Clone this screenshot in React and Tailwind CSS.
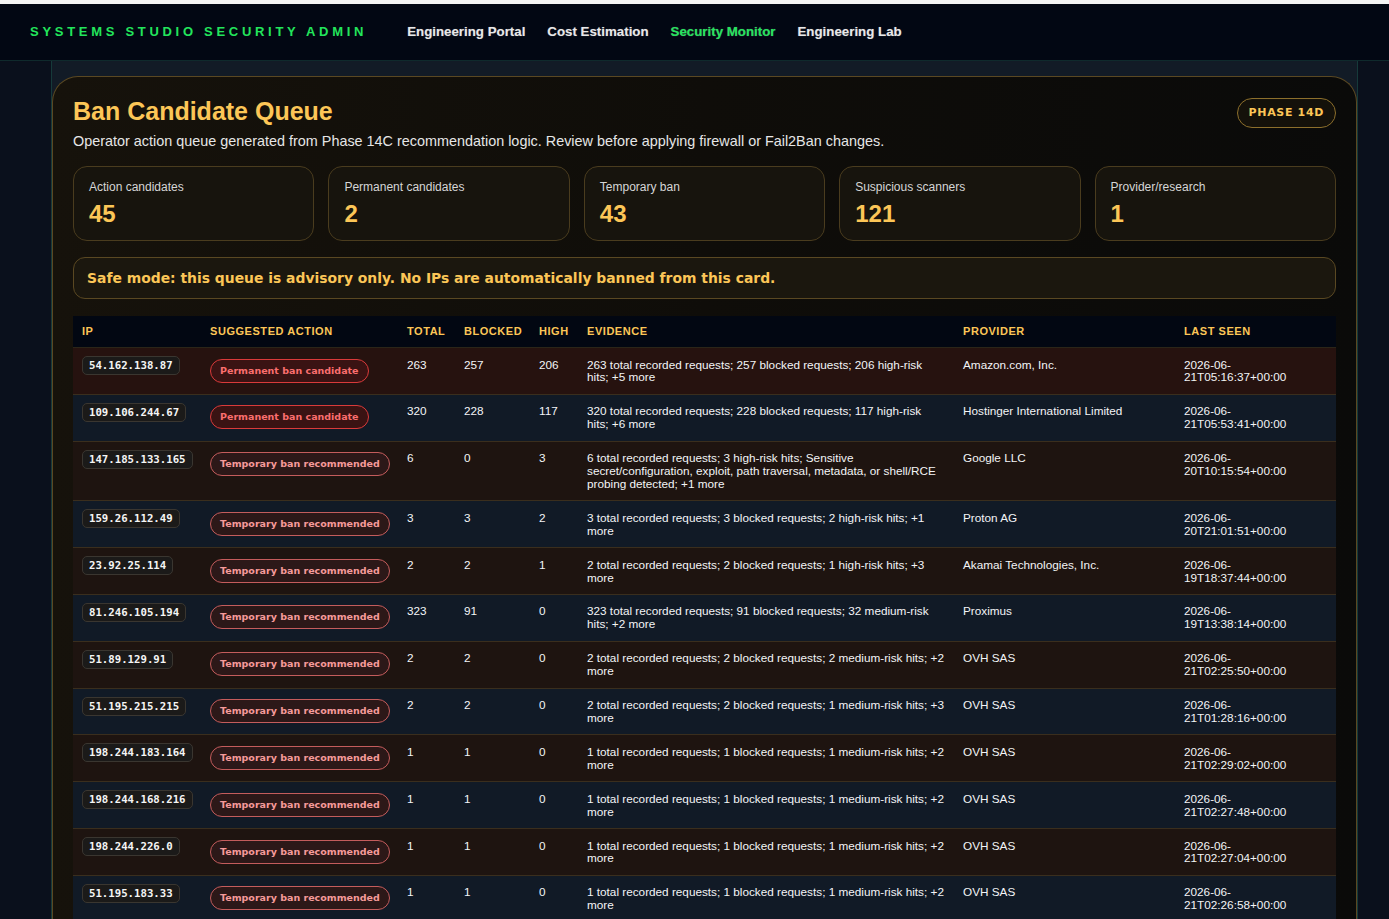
import React from "react";

const PERM = "Permanent ban candidate";
const TEMP = "Temporary ban recommended";

const rows = [
  ["54.162.138.87", PERM, "263", "257", "206", "263 total recorded requests; 257 blocked requests; 206 high-risk hits; +5 more", "Amazon.com, Inc.", "2026-06-21T05:16:37+00:00"],
  ["109.106.244.67", PERM, "320", "228", "117", "320 total recorded requests; 228 blocked requests; 117 high-risk hits; +6 more", "Hostinger International Limited", "2026-06-21T05:53:41+00:00"],
  ["147.185.133.165", TEMP, "6", "0", "3", "6 total recorded requests; 3 high-risk hits; Sensitive secret/configuration, exploit, path traversal, metadata, or shell/RCE probing detected; +1 more", "Google LLC", "2026-06-20T10:15:54+00:00"],
  ["159.26.112.49", TEMP, "3", "3", "2", "3 total recorded requests; 3 blocked requests; 2 high-risk hits; +1 more", "Proton AG", "2026-06-20T21:01:51+00:00"],
  ["23.92.25.114", TEMP, "2", "2", "1", "2 total recorded requests; 2 blocked requests; 1 high-risk hits; +3 more", "Akamai Technologies, Inc.", "2026-06-19T18:37:44+00:00"],
  ["81.246.105.194", TEMP, "323", "91", "0", "323 total recorded requests; 91 blocked requests; 32 medium-risk hits; +2 more", "Proximus", "2026-06-19T13:38:14+00:00"],
  ["51.89.129.91", TEMP, "2", "2", "0", "2 total recorded requests; 2 blocked requests; 2 medium-risk hits; +2 more", "OVH SAS", "2026-06-21T02:25:50+00:00"],
  ["51.195.215.215", TEMP, "2", "2", "0", "2 total recorded requests; 2 blocked requests; 1 medium-risk hits; +3 more", "OVH SAS", "2026-06-21T01:28:16+00:00"],
  ["198.244.183.164", TEMP, "1", "1", "0", "1 total recorded requests; 1 blocked requests; 1 medium-risk hits; +2 more", "OVH SAS", "2026-06-21T02:29:02+00:00"],
  ["198.244.168.216", TEMP, "1", "1", "0", "1 total recorded requests; 1 blocked requests; 1 medium-risk hits; +2 more", "OVH SAS", "2026-06-21T02:27:48+00:00"],
  ["198.244.226.0", TEMP, "1", "1", "0", "1 total recorded requests; 1 blocked requests; 1 medium-risk hits; +2 more", "OVH SAS", "2026-06-21T02:27:04+00:00"],
  ["51.195.183.33", TEMP, "1", "1", "0", "1 total recorded requests; 1 blocked requests; 1 medium-risk hits; +2 more", "OVH SAS", "2026-06-21T02:26:58+00:00"],
  ["51.195.183.40", TEMP, "1", "1", "0", "1 total recorded requests; 1 blocked requests; 1 medium-risk hits; +2 more", "OVH SAS", "2026-06-21T02:26:31+00:00"],
];

const stats = [
  ["Action candidates", "45"],
  ["Permanent candidates", "2"],
  ["Temporary ban", "43"],
  ["Suspicious scanners", "121"],
  ["Provider/research", "1"],
];

const headers = ["IP", "Suggested action", "Total", "Blocked", "High", "Evidence", "Provider", "Last seen"];

const DEJAVU = { fontFamily: '"DejaVu Sans", Verdana, sans-serif' };

function Pill({ kind }) {
  if (kind === PERM) {
    return (
      <span
        className="inline-block rounded-full border-[1.5px] border-[#d93a3a] bg-[#3a1313] px-[9px] py-[5px] text-[9.5px] font-bold leading-[12px] text-[#fb6e6e] whitespace-nowrap"
        style={DEJAVU}
      >
        {kind}
      </span>
    );
  }
  return (
    <span
      className="inline-block rounded-full border-[1.5px] border-[#c45c5c] bg-[#2c1818] px-[9px] py-[5px] text-[9.5px] font-bold leading-[12px] text-[#f59a9a] whitespace-nowrap"
      style={DEJAVU}
    >
      {kind}
    </span>
  );
}

export default function App() {
  return (
    <div className="min-h-screen bg-[#0a101c] text-white" style={{ fontFamily: '"Liberation Sans", Arial, sans-serif' }}>
      <div className="h-[4px] bg-[#f4f4f4]" />
      <header className="flex h-[57px] items-center border-b border-[#0f2a2c] bg-[#020713] pl-[30px]">
        <div className="text-[13px] font-bold tracking-[0.285em] text-[#22e55c]">SYSTEMS STUDIO SECURITY ADMIN</div>
        <nav className="ml-[40px] flex gap-[22px] text-[13.3px] font-bold text-[#e8e8e8] [text-shadow:0_0_1px_rgba(255,255,255,0.35)]">
          <span>Engineering Portal</span>
          <span>Cost Estimation</span>
          <span className="text-[#22e55c]">Security Monitor</span>
          <span>Engineering Lab</span>
        </nav>
      </header>

      <main className="ml-[51px] w-[1307px] border-x border-[#163a3a] bg-[#121b26] pt-[15px]">
        <section className="rounded-t-[26px] border border-b-0 border-[#5a4822] bg-gradient-to-r from-[#16120b] via-[#0f0d09] to-[#0a0a09] px-[20px] pt-[19px] pb-[20px]">
          <div className="flex items-start justify-between">
            <div>
              <h1 className="text-[25px] font-bold leading-[30px] text-[#fcc657]">Ban Candidate Queue</h1>
              <p className="mt-[6px] text-[14.4px] leading-[18px] text-[#e6e6e6]">
                Operator action queue generated from Phase 14C recommendation logic. Review before applying firewall or Fail2Ban changes.
              </p>
            </div>
            <div
              className="mt-[2px] rounded-full border border-[#8c6f2c] bg-[#14110a] px-[11px] py-[7px] text-[11px] font-bold leading-[14px] tracking-[0.06em] text-[#fcc657]"
              style={DEJAVU}
            >
              PHASE 14D
            </div>
          </div>

          <div className="mt-[16px] grid grid-cols-5 gap-[14px]">
            {stats.map(([label, value]) => (
              <div key={label} className="h-[75px] rounded-[14px] border border-[#4a3c1e] bg-[#17140d] px-[15px] pt-[13px]">
                <div className="text-[12px] leading-[15px] text-[#d6d6d6]">{label}</div>
                <div className="mt-[5px] text-[24px] font-bold leading-[28px] text-[#fcc657]">{value}</div>
              </div>
            ))}
          </div>

          <div
            className="mt-[16px] flex h-[42px] items-center rounded-[12px] border border-[#5a4822] bg-[#1b170e] px-[13px] text-[13.9px] font-bold text-[#fcc657]"
            style={DEJAVU}
          >
            Safe mode: this queue is advisory only. No IPs are automatically banned from this card.
          </div>

          <table className="mt-[17px] w-full table-fixed border-collapse text-left">
            <colgroup>
              <col className="w-[128px]" />
              <col className="w-[197px]" />
              <col className="w-[57px]" />
              <col className="w-[75px]" />
              <col className="w-[48px]" />
              <col className="w-[376px]" />
              <col className="w-[221px]" />
              <col className="w-[161px]" />
            </colgroup>
            <thead>
              <tr className="bg-[#020712]">
                {headers.map((h) => (
                  <th key={h} className="border-b border-[#2b2518] px-[9px] py-[10px] text-[11px] font-bold uppercase leading-[11px] tracking-[0.05em] text-[#fcc657]">
                    {h}
                  </th>
                ))}
              </tr>
            </thead>
            <tbody>
              {rows.map((r, i) => {
                const bg = i % 2 === 1 ? "bg-[#111a26]" : r[1] === PERM ? "bg-[#26120f]" : "bg-[#1e1410]";
                return (
                  <tr key={r[0]} className={`${bg} border-b border-[#3a2e1d] align-top text-[11.75px] leading-[12.9px] text-[#f3f4f6]`}>
                    <td className="px-[9px] pt-[10.5px] pb-[9.5px]">
                      <span
                        className="-mt-[2.5px] block w-fit rounded-[5px] border border-[#3a3630] bg-[#1b1a19] px-[6px] py-[2px] text-[10.7px] font-bold leading-[13px] text-[#f5f5f5]"
                        style={{ fontFamily: '"DejaVu Sans Mono", monospace' }}
                      >
                        {r[0]}
                      </span>
                    </td>
                    <td className="px-[9px] pt-[10.5px] pb-[9.5px]">
                      <Pill kind={r[1]} />
                    </td>
                    <td className="px-[9px] pt-[10.5px] pb-[9.5px]">{r[2]}</td>
                    <td className="px-[9px] pt-[10.5px] pb-[9.5px]">{r[3]}</td>
                    <td className="px-[9px] pt-[10.5px] pb-[9.5px]">{r[4]}</td>
                    <td className="px-[9px] pt-[10.5px] pb-[9.5px]">{r[5]}</td>
                    <td className="px-[9px] pt-[10.5px] pb-[9.5px]">{r[6]}</td>
                    <td className="px-[9px] pt-[10.5px] pb-[9.5px]">{r[7]}</td>
                  </tr>
                );
              })}
            </tbody>
          </table>
        </section>
      </main>
    </div>
  );
}
